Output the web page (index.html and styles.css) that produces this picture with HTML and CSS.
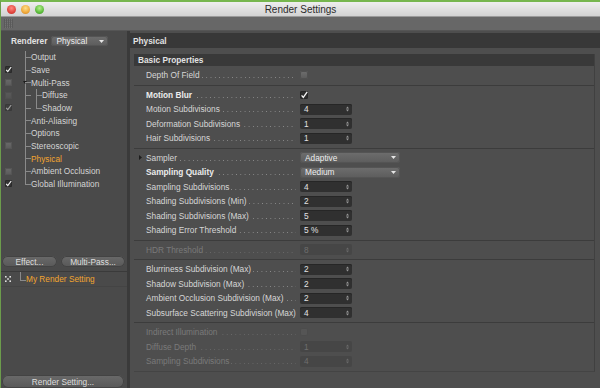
FILE: index.html
```html
<!DOCTYPE html>
<html lang="en">
<head>
    <meta charset="UTF-8">
    <meta name="viewport" content="width=device-width, initial-scale=1.0">
    <title>Render Settings</title>
    <link rel="stylesheet" href="styles.css">
</head>
<body>
    <div class="window">
        <div class="titlebar">
            <div class="lights">
                <span class="light red"></span>
                <span class="light yellow"></span>
                <span class="light green"></span>
            </div>
            <div class="title">Render Settings</div>
            <div></div>
        </div>
        <div class="toolbar"><span class="grip"></span></div>

        <div class="content">
            <aside class="sidebar">
                <div class="renderer">
                    <span class="renderer-label">Renderer</span>
                    <div class="dropdown small">Physical<svg width="5" height="3" viewBox="0 0 5 3"><path d="M0 0H5L2.5 3Z" fill="#e6e6e6"/></svg></div>
                </div>

                <ul class="tree">
                    <li class="node"><span class="box none"></span><span class="node-label">Output</span></li>
                    <li class="node"><span class="box on"><svg width="7" height="7" viewBox="0 0 7 7"><path d="M1.2 3.8L2.8 5.6L6.2 1" fill="none" stroke="#f2f2f2" stroke-width="1.2"/></svg></span><span class="node-label">Save</span></li>
                    <li class="node open"><span class="box"></span><span class="node-label">Multi-Pass</span></li>
                    <li class="node sub"><span class="box dim"></span><span class="node-label">Diffuse</span></li>
                    <li class="node sub last-sub"><span class="box on dim"><svg width="7" height="7" viewBox="0 0 7 7"><path d="M1.2 3.8L2.8 5.6L6.2 1" fill="none" stroke="#f2f2f2" stroke-width="1.2"/></svg></span><span class="node-label">Shadow</span></li>
                    <li class="node"><span class="box none"></span><span class="node-label">Anti-Aliasing</span></li>
                    <li class="node"><span class="box none"></span><span class="node-label">Options</span></li>
                    <li class="node"><span class="box"></span><span class="node-label">Stereoscopic</span></li>
                    <li class="node selected"><span class="box none"></span><span class="node-label">Physical</span></li>
                    <li class="node"><span class="box"></span><span class="node-label">Ambient Occlusion</span></li>
                    <li class="node last"><span class="box on"><svg width="7" height="7" viewBox="0 0 7 7"><path d="M1.2 3.8L2.8 5.6L6.2 1" fill="none" stroke="#f2f2f2" stroke-width="1.2"/></svg></span><span class="node-label">Global Illumination</span></li>
                </ul>

                <div class="side-buttons">
                    <button class="pill effect">Effect...</button>
                    <button class="pill multipass">Multi-Pass...</button>
                </div>

                <ul class="setting-list">
                    <li class="setting">
                        <svg class="setting-icon" width="6" height="6" viewBox="0 0 6 6">
                            <rect x="0" y="0" width="1.6" height="1.6" fill="#e0e0e0"/>
                            <rect x="4.4" y="0" width="1.6" height="1.6" fill="#e0e0e0"/>
                            <rect x="2.2" y="2.2" width="1.6" height="1.6" fill="#e0e0e0"/>
                            <rect x="0" y="4.4" width="1.6" height="1.6" fill="#e0e0e0"/>
                            <rect x="4.4" y="4.4" width="1.6" height="1.6" fill="#e0e0e0"/>
                        </svg>
                        <span class="setting-name">My Render Setting</span>
                    </li>
                </ul>

                <button class="pill wide">Render Setting...</button>
            </aside>

            <main class="panel">
                <div class="panel-head">Physical</div>

                <section class="group">
                    <div class="group-head">Basic Properties</div>

                    <div class="block">
                        <div class="prop">
                            <span class="lead"></span>
                            <span class="prop-name"><span class="prop-label">Depth Of Field</span><span class="leader"></span></span>
                            <span class="check"></span>
                        </div>
                    </div>

                    <div class="block">
                        <div class="prop strong">
                            <span class="lead"></span>
                            <span class="prop-name"><span class="prop-label">Motion Blur</span><span class="leader"></span></span>
                            <span class="check on"><svg width="8" height="8" viewBox="0 0 8 8"><path d="M1.6 4.4L3.3 6.4L7.2 0.8" fill="none" stroke="#f4f4f4" stroke-width="1.3"/></svg></span>
                        </div>
                        <div class="prop">
                            <span class="lead"></span>
                            <span class="prop-name"><span class="prop-label">Motion Subdivisions</span><span class="leader"></span></span>
                            <span class="field">4<svg width="3" height="6" viewBox="0 0 3 6"><path d="M0 2.4L1.5 0.4L3 2.4ZM0 3.6L1.5 5.6L3 3.6Z" fill="#9a9a9a"/></svg></span>
                        </div>
                        <div class="prop">
                            <span class="lead"></span>
                            <span class="prop-name"><span class="prop-label">Deformation Subdivisions</span><span class="leader"></span></span>
                            <span class="field">1<svg width="3" height="6" viewBox="0 0 3 6"><path d="M0 2.4L1.5 0.4L3 2.4ZM0 3.6L1.5 5.6L3 3.6Z" fill="#9a9a9a"/></svg></span>
                        </div>
                        <div class="prop">
                            <span class="lead"></span>
                            <span class="prop-name"><span class="prop-label">Hair Subdivisions</span><span class="leader"></span></span>
                            <span class="field">1<svg width="3" height="6" viewBox="0 0 3 6"><path d="M0 2.4L1.5 0.4L3 2.4ZM0 3.6L1.5 5.6L3 3.6Z" fill="#9a9a9a"/></svg></span>
                        </div>
                    </div>

                    <div class="block">
                        <div class="prop">
                            <span class="lead"><svg width="3" height="5" viewBox="0 0 3 5"><path d="M0 0L3 2.5L0 5Z" fill="#1c1c1c"/></svg></span>
                            <span class="prop-name"><span class="prop-label">Sampler</span><span class="leader"></span></span>
                            <div class="dropdown">Adaptive<svg width="5" height="3" viewBox="0 0 5 3"><path d="M0 0H5L2.5 3Z" fill="#e6e6e6"/></svg></div>
                        </div>
                        <div class="prop strong">
                            <span class="lead"></span>
                            <span class="prop-name"><span class="prop-label">Sampling Quality</span><span class="leader"></span></span>
                            <div class="dropdown">Medium<svg width="5" height="3" viewBox="0 0 5 3"><path d="M0 0H5L2.5 3Z" fill="#e6e6e6"/></svg></div>
                        </div>
                        <div class="prop">
                            <span class="lead"></span>
                            <span class="prop-name"><span class="prop-label">Sampling Subdivisions</span><span class="leader"></span></span>
                            <span class="field">4<svg width="3" height="6" viewBox="0 0 3 6"><path d="M0 2.4L1.5 0.4L3 2.4ZM0 3.6L1.5 5.6L3 3.6Z" fill="#9a9a9a"/></svg></span>
                        </div>
                        <div class="prop">
                            <span class="lead"></span>
                            <span class="prop-name"><span class="prop-label">Shading Subdivisions (Min)</span><span class="leader"></span></span>
                            <span class="field">2<svg width="3" height="6" viewBox="0 0 3 6"><path d="M0 2.4L1.5 0.4L3 2.4ZM0 3.6L1.5 5.6L3 3.6Z" fill="#9a9a9a"/></svg></span>
                        </div>
                        <div class="prop">
                            <span class="lead"></span>
                            <span class="prop-name"><span class="prop-label">Shading Subdivisions (Max)</span><span class="leader"></span></span>
                            <span class="field">5<svg width="3" height="6" viewBox="0 0 3 6"><path d="M0 2.4L1.5 0.4L3 2.4ZM0 3.6L1.5 5.6L3 3.6Z" fill="#9a9a9a"/></svg></span>
                        </div>
                        <div class="prop">
                            <span class="lead"></span>
                            <span class="prop-name"><span class="prop-label">Shading Error Threshold</span><span class="leader"></span></span>
                            <span class="field">5 %<svg width="3" height="6" viewBox="0 0 3 6"><path d="M0 2.4L1.5 0.4L3 2.4ZM0 3.6L1.5 5.6L3 3.6Z" fill="#9a9a9a"/></svg></span>
                        </div>
                    </div>

                    <div class="block">
                        <div class="prop muted">
                            <span class="lead"></span>
                            <span class="prop-name"><span class="prop-label">HDR Threshold</span><span class="leader"></span></span>
                            <span class="field">8<svg width="3" height="6" viewBox="0 0 3 6"><path d="M0 2.4L1.5 0.4L3 2.4ZM0 3.6L1.5 5.6L3 3.6Z" fill="#6a6a6a"/></svg></span>
                        </div>
                    </div>

                    <div class="block">
                        <div class="prop">
                            <span class="lead"></span>
                            <span class="prop-name"><span class="prop-label">Blurriness Subdivision (Max)</span><span class="leader"></span></span>
                            <span class="field">2<svg width="3" height="6" viewBox="0 0 3 6"><path d="M0 2.4L1.5 0.4L3 2.4ZM0 3.6L1.5 5.6L3 3.6Z" fill="#9a9a9a"/></svg></span>
                        </div>
                        <div class="prop">
                            <span class="lead"></span>
                            <span class="prop-name"><span class="prop-label">Shadow Subdivision (Max)</span><span class="leader"></span></span>
                            <span class="field">2<svg width="3" height="6" viewBox="0 0 3 6"><path d="M0 2.4L1.5 0.4L3 2.4ZM0 3.6L1.5 5.6L3 3.6Z" fill="#9a9a9a"/></svg></span>
                        </div>
                        <div class="prop">
                            <span class="lead"></span>
                            <span class="prop-name"><span class="prop-label">Ambient Occlusion Subdivision (Max)</span><span class="leader"></span></span>
                            <span class="field">2<svg width="3" height="6" viewBox="0 0 3 6"><path d="M0 2.4L1.5 0.4L3 2.4ZM0 3.6L1.5 5.6L3 3.6Z" fill="#9a9a9a"/></svg></span>
                        </div>
                        <div class="prop">
                            <span class="lead"></span>
                            <span class="prop-name"><span class="prop-label">Subsurface Scattering Subdivision (Max)</span><span class="leader"></span></span>
                            <span class="field">4<svg width="3" height="6" viewBox="0 0 3 6"><path d="M0 2.4L1.5 0.4L3 2.4ZM0 3.6L1.5 5.6L3 3.6Z" fill="#9a9a9a"/></svg></span>
                        </div>
                    </div>

                    <div class="block">
                        <div class="prop muted">
                            <span class="lead"></span>
                            <span class="prop-name"><span class="prop-label">Indirect Illumination</span><span class="leader"></span></span>
                            <span class="check"></span>
                        </div>
                        <div class="prop muted">
                            <span class="lead"></span>
                            <span class="prop-name"><span class="prop-label">Diffuse Depth</span><span class="leader"></span></span>
                            <span class="field">1<svg width="3" height="6" viewBox="0 0 3 6"><path d="M0 2.4L1.5 0.4L3 2.4ZM0 3.6L1.5 5.6L3 3.6Z" fill="#6a6a6a"/></svg></span>
                        </div>
                        <div class="prop muted">
                            <span class="lead"></span>
                            <span class="prop-name"><span class="prop-label">Sampling Subdivisions</span><span class="leader"></span></span>
                            <span class="field">4<svg width="3" height="6" viewBox="0 0 3 6"><path d="M0 2.4L1.5 0.4L3 2.4ZM0 3.6L1.5 5.6L3 3.6Z" fill="#6a6a6a"/></svg></span>
                        </div>
                    </div>
                </section>
            </main>
        </div>
    </div>
</body>
</html>
```

FILE: styles.css
```css
/* Universal Reset */
*
{
    margin: 0;
    padding: 0;
    box-sizing: border-box;
}

html, body
{
    width: 600px;
    height: 388px;
    overflow: hidden;
}

body
{
    background-color: #4c4c4c;
    font-family: "Liberation Sans", Arial, sans-serif;
    font-size: 8.3px;
    color: #d6d6d6;
}

.window
{
    height: 388px;
    display: flex;
    flex-direction: column;
    border-top: 2px solid #76b64e;
    border-left: 1px solid #6c9c4c;
}

/* Title Bar */
.titlebar
{
    height: 15px;
    flex-shrink: 0;
    display: grid;
    grid-template-columns: 1fr auto 1fr;
    align-items: center;
    background: linear-gradient(#eeeeee, #d2d2d2);
    border-bottom: 1px solid #9a9a9a;
}

.lights
{
    display: flex;
    gap: 5px;
    padding-left: 5.5px;
}

.light
{
    width: 9px;
    height: 9px;
    border-radius: 50%;
}

.light.red
{
    background: radial-gradient(circle at 50% 35%, #ff8a80, #e2463e 60%, #b02a24);
}

.light.yellow
{
    background: radial-gradient(circle at 50% 35%, #ffe08a, #efa83a 60%, #c07a1c);
}

.light.green
{
    background: radial-gradient(circle at 50% 35%, #b4f08a, #5cbc3c 60%, #3a8a24);
}

.title
{
    font-size: 10px;
    color: #2c2c2c;
}

/* Toolbar strip */
.toolbar
{
    height: 14px;
    flex-shrink: 0;
    padding: 2px 3px;
    background-color: #676767;
    border-bottom: 1px solid #555555;
}

.grip
{
    display: block;
    width: 9px;
    height: 9px;
    background-image:
        repeating-linear-gradient(90deg, #5a5a5a 0 1px, transparent 1px 2px),
        repeating-linear-gradient(0deg, #727272 0 1px, transparent 1px 2px);
}

.content
{
    flex: 1;
    display: flex;
    min-height: 0;
}

/* Sidebar */
.sidebar
{
    width: 129px;
    flex-shrink: 0;
    display: flex;
    flex-direction: column;
    background-color: #4a4a4a;
    border-right: 3px solid #3a3a3a;
}

.renderer
{
    height: 20px;
    flex-shrink: 0;
    display: flex;
    align-items: center;
    gap: 4px;
    padding-left: 10px;
}

.renderer-label
{
    font-weight: bold;
    color: #e2e2e2;
}

.dropdown
{
    width: 100px;
    height: 11px;
    margin-left: 4px;
    display: flex;
    align-items: center;
    justify-content: space-between;
    padding: 0 4px 0 5px;
    border-radius: 3px;
    background: linear-gradient(#6e6e6e, #5c5c5c);
    box-shadow: inset 0 0 0 1px #545454;
    color: #eeeeee;
}

.dropdown.small
{
    width: 57px;
    height: 10px;
    margin-left: 0;
}

.tree
{
    list-style: none;
    flex-shrink: 0;
}

.node
{
    position: relative;
    height: 12.67px;
    display: flex;
    align-items: center;
    padding-left: 4px;
    color: #d4d4d4;
}

/* tree connector lines */
.node::before
{
    content: "";
    position: absolute;
    left: 24px;
    top: 0;
    bottom: 0;
    width: 1px;
    background-color: #8a8a8a;
}

.node::after
{
    content: "";
    position: absolute;
    left: 24px;
    top: 6px;
    width: 6px;
    height: 1px;
    background-color: #8a8a8a;
}

.node.last::before
{
    bottom: 6px;
}

.node-label
{
    margin-left: 19px;
}

.sub .node-label
{
    margin-left: 30px;
}

.sub .node-label::before
{
    content: "";
    position: absolute;
    left: 35px;
    top: 0;
    bottom: 0;
    width: 1px;
    background-color: #8a8a8a;
}

.sub.last-sub .node-label::before
{
    bottom: 6px;
}

.sub .node-label::after
{
    content: "";
    position: absolute;
    left: 35px;
    top: 6px;
    width: 6px;
    height: 1px;
    background-color: #8a8a8a;
}

.open .node-label::before
{
    content: "";
    position: absolute;
    left: 22px;
    top: 5px;
    border-left: 2.5px solid transparent;
    border-right: 2.5px solid transparent;
    border-top: 3px solid #1c1c1c;
}

.node.selected
{
    color: #f2a530;
}

.box
{
    width: 7px;
    height: 7px;
    flex-shrink: 0;
    display: flex;
    align-items: center;
    justify-content: center;
    border-radius: 1.5px;
    background: linear-gradient(#6a6a6a, #5a5a5a);
    box-shadow: inset 0 0 0 1px #555555;
}

.box.on
{
    background: #333333;
    box-shadow: inset 0 0 0 1px #2a2a2a;
}

.box.none
{
    visibility: hidden;
}

.box.dim
{
    opacity: 0.5;
}

.side-buttons
{
    display: flex;
    gap: 4px;
    padding-left: 1px;
    margin-top: 66px;
}

.pill
{
    height: 11px;
    border: none;
    border-radius: 6px;
    background: linear-gradient(#6a6a6a, #585858);
    box-shadow: inset 0 0 0 1px #434343;
    font-family: inherit;
    font-size: 8.3px;
    color: #dedede;
    cursor: pointer;
}

.pill.effect
{
    width: 55px;
}

.pill.multipass
{
    width: 64px;
}

.pill.wide
{
    width: 122px;
    height: 13px;
    margin: auto 0 0 1px;
}

.setting-list
{
    list-style: none;
    margin-top: 4px;
    border-top: 1px solid #3a3a3a;
}

.setting
{
    position: relative;
    height: 15px;
    display: flex;
    align-items: center;
    padding-left: 4px;
    border-bottom: 1px solid #444444;
}

.setting-name
{
    margin-left: 15px;
    color: #f2a530;
}

.setting-name::before
{
    content: "";
    position: absolute;
    left: 19px;
    top: 0;
    height: 8px;
    width: 5px;
    border-left: 1px solid #8a8a8a;
    border-bottom: 1px solid #8a8a8a;
}

/* Main panel */
.panel
{
    flex: 1;
    padding-top: 2px;
    background-color: #4e4e4e;
}

.panel-head
{
    height: 15px;
    display: flex;
    align-items: center;
    padding-left: 3px;
    background-color: #383838;
    font-weight: bold;
    color: #e2e2e2;
}

.group
{
    margin: 6px 5px 0 4px;
    border-right: 1px solid #404040;
    border-bottom: 1px solid #444444;
}

.group-head
{
    height: 12px;
    display: flex;
    align-items: center;
    padding-left: 4px;
    background-color: #393939;
    font-weight: bold;
    color: #e2e2e2;
}

.block
{
    padding: 2px 0;
}

.block + .block
{
    border-top: 1px solid #3c3c3c;
}

.prop
{
    height: 14.5px;
    display: flex;
    align-items: center;
    padding-left: 4px;
}

.lead
{
    width: 8px;
    display: flex;
    align-items: center;
    padding-left: 1px;
}

.prop-name
{
    width: 150px;
    display: flex;
    align-items: center;
}

.prop-label
{
    white-space: nowrap;
}

.leader
{
    flex: 1;
    height: 1px;
    margin: 5px 0 0 2px;
    background: linear-gradient(to right, #8c8c8c 1px, transparent 1px) right 0 / 4.3px 1px repeat-x;
}

.prop.strong .prop-label
{
    font-weight: bold;
    color: #ececec;
}

.field
{
    width: 52px;
    height: 11px;
    margin-left: 4px;
    display: flex;
    align-items: center;
    justify-content: space-between;
    padding: 0 3px 0 4px;
    border-radius: 2px;
    background-color: #303030;
    box-shadow: inset 0 1px 0 #262626;
    color: #e2e2e2;
}

.check
{
    width: 8px;
    height: 8px;
    margin-left: 4px;
    display: flex;
    align-items: center;
    justify-content: center;
    border-radius: 2px;
    background: linear-gradient(#6e6e6e, #5a5a5a);
    box-shadow: inset 0 0 0 1px #505050;
}

.check.on
{
    background: #2e2e2e;
    box-shadow: inset 0 0 0 1px #262626;
}

/* Disabled rows */
.prop.muted
{
    color: #7a7a7a;
}

.prop.muted .leader
{
    background-image: linear-gradient(to right, #686868 1px, transparent 1px);
}

.prop.muted .field
{
    background-color: #464646;
    box-shadow: none;
    color: #6e6e6e;
}

.prop.muted .check
{
    background: #555555;
    box-shadow: inset 0 0 0 1px #4c4c4c;
}
```
